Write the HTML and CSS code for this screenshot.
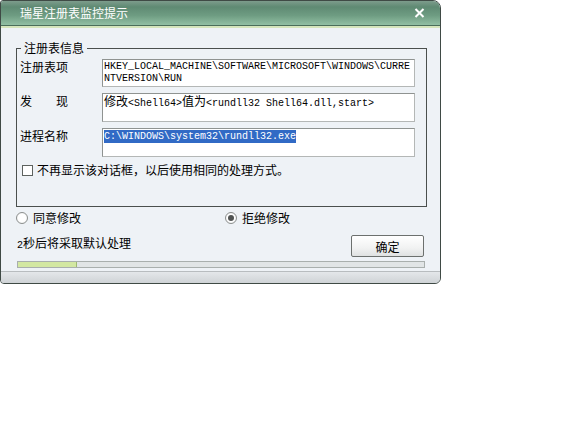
FILE: index.html
```html
<!DOCTYPE html>
<html lang="zh-CN">
<head>
    <meta charset="UTF-8">
    <title>瑞星注册表监控提示</title>
    <link rel="stylesheet" href="styles.css">
</head>
<body>

<div class="dialog">
    <div class="titlebar">
        <span class="title">瑞星注册表监控提示</span>
        <svg class="close" width="11" height="10" viewBox="0 0 11 10">
            <path d="M1.5 1 L9.5 9 M9.5 1 L1.5 9" stroke="#fff" stroke-width="2" fill="none"/>
        </svg>
    </div>

    <div class="content">
        <fieldset class="group">
            <legend>注册表信息</legend>

            <div class="info-grid">
                <div class="label">注册表项</div>
                <div class="field field-tall mono">HKEY_LOCAL_MACHINE\SOFTWARE\MICROSOFT\WINDOWS\CURRE<br>NTVERSION\RUN</div>

                <div class="label">发　　现</div>
                <div class="field mono"><span class="cn">修改</span>&lt;Shell64&gt;<span class="cn">值为</span>&lt;rundll32 Shell64.dll,start&gt;</div>

                <div class="label">进程名称</div>
                <div class="field mono"><span class="selected">C:\WINDOWS\system32\rundll32.exe</span></div>
            </div>

            <div class="check-row">
                <span class="checkbox"></span>
                <span>不再显示该对话框，以后使用相同的处理方式。</span>
            </div>
        </fieldset>

        <div class="radio-row">
            <div class="radio-item first">
                <span class="radio"></span>
                <span>同意修改</span>
            </div>
            <div class="radio-item">
                <span class="radio checked"></span>
                <span>拒绝修改</span>
            </div>
        </div>

        <div class="status-row">
            <span class="status"><span class="mono">2</span>秒后将采取默认处理</span>
            <button type="button">确定</button>
        </div>

        <div class="progress">
            <div class="progress-fill" style="width: 59px;"></div>
        </div>
    </div>

    <div class="footer"></div>
</div>

</body>
</html>
```

FILE: styles.css
```css
body {
    margin: 0;
    background-color: #ffffff;
    font-family: "Noto Sans CJK SC", "Liberation Sans", sans-serif;
    font-size: 12px;
    line-height: 12px;
    color: #000;
}

.dialog {
    width: 441px;
    box-sizing: border-box;
    background-color: #eef2f6;
    border: 1px solid #3f4a45;
    border-radius: 3px 8px 6px 4px;
    overflow: hidden;
}

.titlebar {
    height: 24px;
    display: flex;
    align-items: center;
    justify-content: space-between;
    padding: 0 15px 0 19px;
    background: linear-gradient(#7d9c8c 0, #5f8a73 25%, #6e9c82 60%, #91bfa3 100%);
    border-bottom: 1px solid #4a6e5a;
    box-shadow: 0 2px 0 #d5e5bc;
    margin-bottom: 2px;
}

.title {
    color: #ffffff;
    font-size: 12px;
    line-height: 14px;
}

.close {
    display: block;
    margin-top: -1px;
}

.content {
    padding: 13px 13px 0 15px;
}

.group {
    margin: 0;
    width: 411px;
    box-sizing: border-box;
    border: 1px solid #4a4f4d;
    padding: 4px 10px 30px 3px;
    min-width: 0;
}

.group legend {
    padding: 0 3px;
    margin-left: 1px;
    line-height: 14px;
}

.info-grid {
    display: grid;
    grid-template-columns: 82px 313px;
    row-gap: 6px;
}

.label {
    padding-top: 2px;
}

.field {
    height: 29px;
    box-sizing: border-box;
    background-color: #ffffff;
    border: 1px solid #8f9391;
    border-right-color: #b4b7b6;
    border-bottom-color: #b4b7b6;
    padding: 1px 1px 0 1px;
    white-space: nowrap;
    overflow: hidden;
}

.field-tall {
    height: 28px;
}

.mono {
    font-family: "Liberation Mono", "DejaVu Sans Mono", monospace;
    font-size: 10px;
    line-height: 12px;
}

.cn {
    font-family: "Noto Sans CJK SC", sans-serif;
    font-size: 12px;
}

.selected {
    display: inline-block;
    background-color: #316ac5;
    color: #ffffff;
    line-height: 13px;
}

.check-row {
    display: flex;
    align-items: center;
    margin-top: 7px;
    padding-left: 2px;
    gap: 4px;
}

.checkbox {
    width: 11px;
    height: 11px;
    box-sizing: border-box;
    border: 1px solid #5d625f;
    background-color: #ffffff;
}

.radio-row {
    display: flex;
    margin-top: 5px;
}

.radio-item {
    display: flex;
    align-items: center;
    gap: 5px;
}

.radio-item.first {
    width: 209px;
}

.radio {
    width: 12px;
    height: 12px;
    box-sizing: border-box;
    border: 1px solid #8c8f8e;
    border-radius: 50%;
    background: radial-gradient(circle, #ffffff 50%, #e6e8e8 100%);
    display: flex;
    align-items: center;
    justify-content: center;
}

.radio.checked::after {
    content: "";
    width: 6px;
    height: 6px;
    border-radius: 50%;
    background-color: #505352;
}

.status-row {
    display: flex;
    justify-content: space-between;
    align-items: flex-start;
    margin-top: 11px;
}

.status {
    margin-top: 2px;
    margin-left: 1px;
}

.status .mono {
    font-size: 10px;
}

button {
    width: 73px;
    height: 22px;
    margin-right: 3px;
    padding: 0;
    border: 1px solid #6c706e;
    border-radius: 2px;
    background: linear-gradient(#ffffff, #f1f2f2 60%, #dfe1e1);
    font-family: "Noto Sans CJK SC", sans-serif;
    font-size: 12px;
    color: #000;
}

.progress {
    margin-top: 4px;
    margin-left: 1px;
    width: 408px;
    height: 7px;
    box-sizing: border-box;
    border: 1px solid #a9afad;
    background-color: #e1e5e6;
}

.progress-fill {
    height: 100%;
    box-sizing: border-box;
    background-color: #d3e8a2;
    border-right: 1px solid #9fbb72;
}

.footer {
    margin-top: 3px;
    height: 11px;
    border-top: 1px solid #b8bcbf;
    background: linear-gradient(#e4e7ea, #cfd3d6);
}
```
